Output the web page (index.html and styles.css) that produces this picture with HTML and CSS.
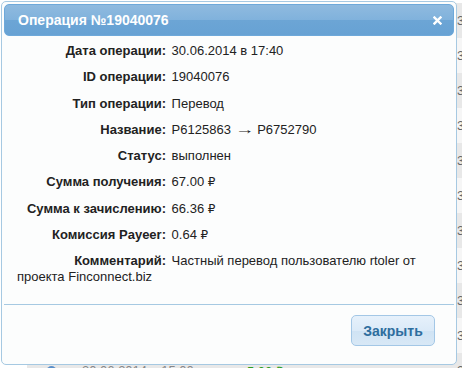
FILE: index.html
```html
<!DOCTYPE html>
<html>
<head>
    <meta charset="UTF-8">
    <title>Операция №19040076</title>
    <link rel="stylesheet" href="styles.css">
</head>
<body>
    <div class="history">
        <div class="hrow"><span class="hid">3:00</span></div>
        <div class="hrow"><span class="hid">3:00</span></div>
        <div class="hrow"><span class="hid">3:00</span></div>
        <div class="hrow"><span class="hid">3:00</span></div>
        <div class="hrow"><span class="hid">3:00</span></div>
        <div class="hrow"><span class="hid">3:00</span></div>
        <div class="hrow"><span class="hid">3:00</span></div>
        <div class="hrow"><span class="hid">3:00</span></div>
        <div class="hrow"><span class="hid">3:00</span></div>
        <div class="hrow"><span class="hid">3:00</span></div>
        <div class="hrow"><span class="dot"></span><span class="hdate">30.06.2014 в 15:00</span><span class="hsum">5.00 ₽</span><span class="hid">3:00</span></div>
    </div>

    <div class="dialog">
        <div class="titlebar">
            <span class="title">Операция №19040076</span>
            <a class="close" href="#">
                <svg width="9" height="9" viewBox="0 0 9 9"><path d="M1.5 1.5 L7.5 7.5 M7.5 1.5 L1.5 7.5" stroke="#fff" stroke-width="2.4" stroke-linecap="square"/></svg>
            </a>
        </div>
        <div class="content">
            <div class="line"><span class="label">Дата операции:</span> 30.06.2014 в 17:40</div>
            <div class="line"><span class="label">ID операции:</span> 19040076</div>
            <div class="line"><span class="label">Тип операции:</span> Перевод</div>
            <div class="line"><span class="label">Название:</span> P6125863 <span class="arrow">→</span> P6752790</div>
            <div class="line"><span class="label">Статус:</span> выполнен</div>
            <div class="line"><span class="label">Сумма получения:</span> 67.00 <span class="rub">₽</span></div>
            <div class="line"><span class="label">Сумма к зачислению:</span> 66.36 <span class="rub">₽</span></div>
            <div class="line"><span class="label">Комиссия Payeer:</span> 0.64 <span class="rub">₽</span></div>
            <div class="line"><span class="label">Комментарий:</span> Частный перевод пользователю rtoler от проекта Finconnect.biz</div>
        </div>
        <div class="buttons">
            <button type="button" class="btn">Закрыть</button>
        </div>
    </div>
</body>
</html>
```

FILE: styles.css
```css
body {
    margin: 0;
    font-family: "Liberation Sans", Arial, sans-serif;
    background: #fff;
    overflow: hidden;
}

/* page behind the dialog */
.history {
    margin-left: 27px;
    padding-top: 3px;
}

.hrow {
    display: flex;
    align-items: center;
    height: 35px;
    padding-left: 20px;
    font-size: 13px;
    color: #666;
    background: #e8e8e8;
}

.hrow:nth-child(even) {
    background: #f6f6f6;
}

.hrow .hid {
    margin-left: auto;
    width: 5px;
    overflow: hidden;
    white-space: nowrap;
}

.dot {
    width: 9px;
    height: 9px;
    border-radius: 50%;
    background: #5b8fc9;
    margin-right: 26px;
}

.hdate {
    width: 165px;
    color: #888;
}

.hsum {
    color: #2f9e1f;
}

/* dialog */
.dialog {
    position: absolute;
    left: 1px;
    top: 1px;
    width: 450px;
    height: 358px;
    padding: 2px;
    border: 1px solid #a6c9e2;
    border-radius: 5px;
    background: #fcfdfd;
    color: #222;
    display: flex;
    flex-direction: column;
}

.titlebar {
    display: flex;
    justify-content: space-between;
    align-items: center;
    height: 30px;
    padding: 0 11px 0 13px;
    border: 1px solid #6ea9da;
    border-radius: 5px;
    background: linear-gradient(#8fbadf, #80b2dc 50%, #6ca5d5 51%, #67a2d4);
}

.title {
    color: #fff;
    font-weight: bold;
    font-size: 14px;
}

.close {
    display: flex;
}

.content {
    flex: 1;
    padding: 7px 13px 0;
    font-size: 13px;
    line-height: 1.25;
}

.line {
    margin-bottom: 10px;
}

.label {
    display: inline-block;
    width: 149px;
    text-align: right;
    font-weight: bold;
    margin-right: 2px;
}

.arrow {
    display: inline-block;
    transform: scaleX(1.5);
    margin: 0 3px;
}

.rub {
    font-family: "DejaVu Sans", sans-serif;
    font-size: 12px;
}

.buttons {
    border-top: 1px solid #a6c9e2;
    height: 57px;
    display: flex;
    justify-content: flex-end;
    align-items: flex-start;
    padding-right: 19px;
}

.btn {
    margin-top: 10px;
    width: 84px;
    height: 31px;
    border: 1px solid #a3c7e6;
    border-radius: 5px;
    background: linear-gradient(#e6f1fb, #dbeaf8 50%, #cfe3f4 51%, #d8e8f6);
    color: #2e6e9e;
    font-family: "Liberation Sans", Arial, sans-serif;
    font-weight: bold;
    font-size: 14px;
}
```
